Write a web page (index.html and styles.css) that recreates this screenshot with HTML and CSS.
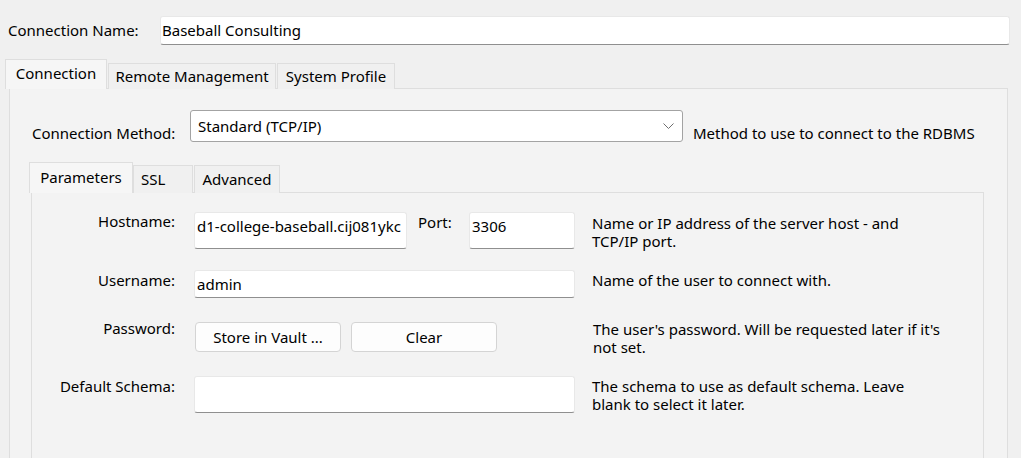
FILE: index.html
```html
<!DOCTYPE html>
<html lang="en">
<head>
<meta charset="utf-8">
<title>Connection</title>
<link rel="stylesheet" href="styles.css">
</head>
<body>
<div class="window">
  <div class="name-row">
    <span class="name-label">Connection Name:</span>
    <div class="field name-field">Baseball Consulting</div>
  </div>

  <div class="tabs outer-tabs">
    <div class="tab active tab-connection">Connection</div>
    <div class="tab tab-remote">Remote Management</div>
    <div class="tab tab-profile">System Profile</div>
  </div>

  <div class="panel outer-panel">
    <div class="method-row">
      <span class="method-label">Connection Method:</span>
      <div class="select">
        <span>Standard (TCP/IP)</span>
        <svg class="chevron" width="11" height="6" viewBox="0 0 11 6"><polyline points="0.5,0.5 5.5,5.5 10.5,0.5" fill="none" stroke="#6e6e6e" stroke-width="1"/></svg>
      </div>
      <span class="hint">Method to use to connect to the RDBMS</span>
    </div>

    <div class="tabs inner-tabs">
      <div class="tab active tab-params">Parameters</div>
      <div class="tab tab-ssl">SSL</div>
      <div class="tab tab-advanced">Advanced</div>
    </div>

    <div class="panel inner-panel">
      <div class="row row-host">
        <span class="label">Hostname:</span>
        <div class="control">
          <div class="field host-field">d1-college-baseball.cij081ykc</div>
          <span class="port-label">Port:</span>
          <div class="field port-field">3306</div>
        </div>
        <div class="desc desc-host"><span class="line">Name or IP address of the server host - and</span><span class="line">TCP/IP port.</span></div>
      </div>

      <div class="row row-user">
        <span class="label">Username:</span>
        <div class="control">
          <div class="field user-field">admin</div>
        </div>
        <div class="desc"><span class="line">Name of the user to connect with.</span></div>
      </div>

      <div class="row row-pass">
        <span class="label">Password:</span>
        <div class="control buttons">
          <button class="btn">Store in Vault ...</button>
          <button class="btn">Clear</button>
        </div>
        <div class="desc"><span class="line">The user's password. Will be requested later if it's</span><span class="line">not set.</span></div>
      </div>

      <div class="row row-schema">
        <span class="label">Default Schema:</span>
        <div class="control">
          <div class="field schema-field"></div>
        </div>
        <div class="desc"><span class="line">The schema to use as default schema. Leave</span><span class="line">blank to select it later.</span></div>
      </div>
    </div>
  </div>
</div>
</body>
</html>
```

FILE: styles.css
```css
html, body {
  margin: 0;
  padding: 0;
}

body {
  width: 1021px;
  height: 458px;
  overflow: hidden;
  background: #f0f0f0;
  font-family: "Noto Sans", "Open Sans", sans-serif;
  font-size: 15px;
  line-height: 17px;
  color: #000;
}

.window {
  padding-top: 16px;
}

/* ---------- connection name ---------- */
.name-row {
  display: flex;
  align-items: center;
  padding: 0 11px 0 8px;
}

.name-label {
  width: 152px;
  flex: none;
}

.field {
  box-sizing: border-box;
  background: #fff;
  border: 1px solid #e8e8e8;
  border-bottom-color: #8f8f8f;
  border-radius: 3px;
  white-space: nowrap;
  overflow: hidden;
}

.name-field {
  flex: 1;
  height: 29px;
  padding: 5px 1px 0;
}

/* ---------- tabs ---------- */
.tabs {
  display: flex;
  align-items: flex-end;
}

.tab {
  box-sizing: border-box;
  display: flex;
  align-items: center;
  justify-content: center;
  border: 1px solid #dedede;
  border-bottom: none;
  background: #f0f0f0;
  white-space: nowrap;
}

.tab.active {
  position: relative;
  z-index: 1;
  background: #f6f6f6;
  padding-bottom: 2px;
}

.outer-tabs {
  margin: 14px 0 0 5px;
  height: 30px;
}

.outer-tabs .tab {
  height: 26px;
  margin-right: 1px;
}

.outer-tabs .tab.active {
  height: 30px;
}

.tab-connection { width: 102px; }
.tab-remote { width: 168px; }
.tab-profile { width: 118px; }

.inner-tabs {
  margin-top: 20px;
  height: 31px;
}

.inner-tabs .tab {
  height: 28px;
}

.inner-tabs .tab.active {
  height: 31px;
}

.tab-params { width: 104px; }
.tab-ssl { width: 60px; justify-content: flex-start; padding-left: 7px; margin-right: 1px; }
.tab-advanced { width: 86px; }

/* ---------- panels ---------- */
.panel {
  border: 1px solid #dedede;
  background: #f3f3f3;
}

.outer-panel {
  margin: -1px 13px 0 9px;
  padding: 21px 0 0 19px;
  height: 400px;
}

.inner-panel {
  margin: -1px 23px 0 2px;
  padding-top: 19px;
  height: 300px;
}

/* ---------- connection method ---------- */
.method-row {
  display: flex;
  align-items: flex-end;
  padding-left: 3px;
}

.method-label {
  width: 158px;
  flex: none;
}

.select {
  box-sizing: border-box;
  width: 493px;
  height: 32px;
  display: flex;
  align-items: center;
  justify-content: space-between;
  padding: 0 8px 0 7px;
  background: #fff;
  border: 1px solid #a3a3a3;
  border-radius: 3px;
}

.chevron {
  display: block;
}

.hint {
  margin-left: 10px;
  white-space: nowrap;
}

/* ---------- parameter rows ---------- */
.row {
  display: flex;
  align-items: flex-start;
}

.label {
  box-sizing: border-box;
  width: 143px;
  flex: none;
  text-align: right;
  padding-top: 2px;
  margin-right: 19px;
  white-space: nowrap;
}

.control {
  width: 381px;
  flex: none;
  display: flex;
  align-items: flex-start;
}

.desc {
  display: flex;
  flex-direction: column;
  margin-left: 17px;
  padding-top: 1px;
  white-space: nowrap;
}

.desc .line {
  display: block;
  height: 18px;
  line-height: 18px;
}

.row-host {
  height: 37px;
}

.row-host .label {
  padding-top: 1px;
}

.row-host .desc {
  padding-top: 2px;
}

.host-field {
  width: 213px;
  height: 37px;
  padding: 5px 2px 0;
}

.port-label {
  flex: none;
  box-sizing: border-box;
  width: 62px;
  padding: 2px 0 0 11px;
}

.port-field {
  width: 106px;
  height: 37px;
  padding: 5px 2px 0;
}

.row-user {
  margin-top: 21px;
  height: 28px;
}

.user-field {
  width: 381px;
  height: 28px;
  padding: 5px 2px 0;
}

.row-pass {
  margin-top: 22px;
  height: 32px;
}

.row-pass .label {
  padding-top: 0;
}

.row-pass .desc {
  padding-top: 0;
}

.buttons {
  padding: 2px 0 0 1px;
  gap: 10px;
}

.btn {
  box-sizing: border-box;
  width: 146px;
  height: 30px;
  padding: 0;
  font: inherit;
  color: #000;
  background: #fdfdfd;
  border: 1px solid #d4d4d4;
  border-radius: 4px;
}

.row-schema {
  margin-top: 24px;
  height: 37px;
}

.schema-field {
  width: 382px;
  height: 37px;
}
```
